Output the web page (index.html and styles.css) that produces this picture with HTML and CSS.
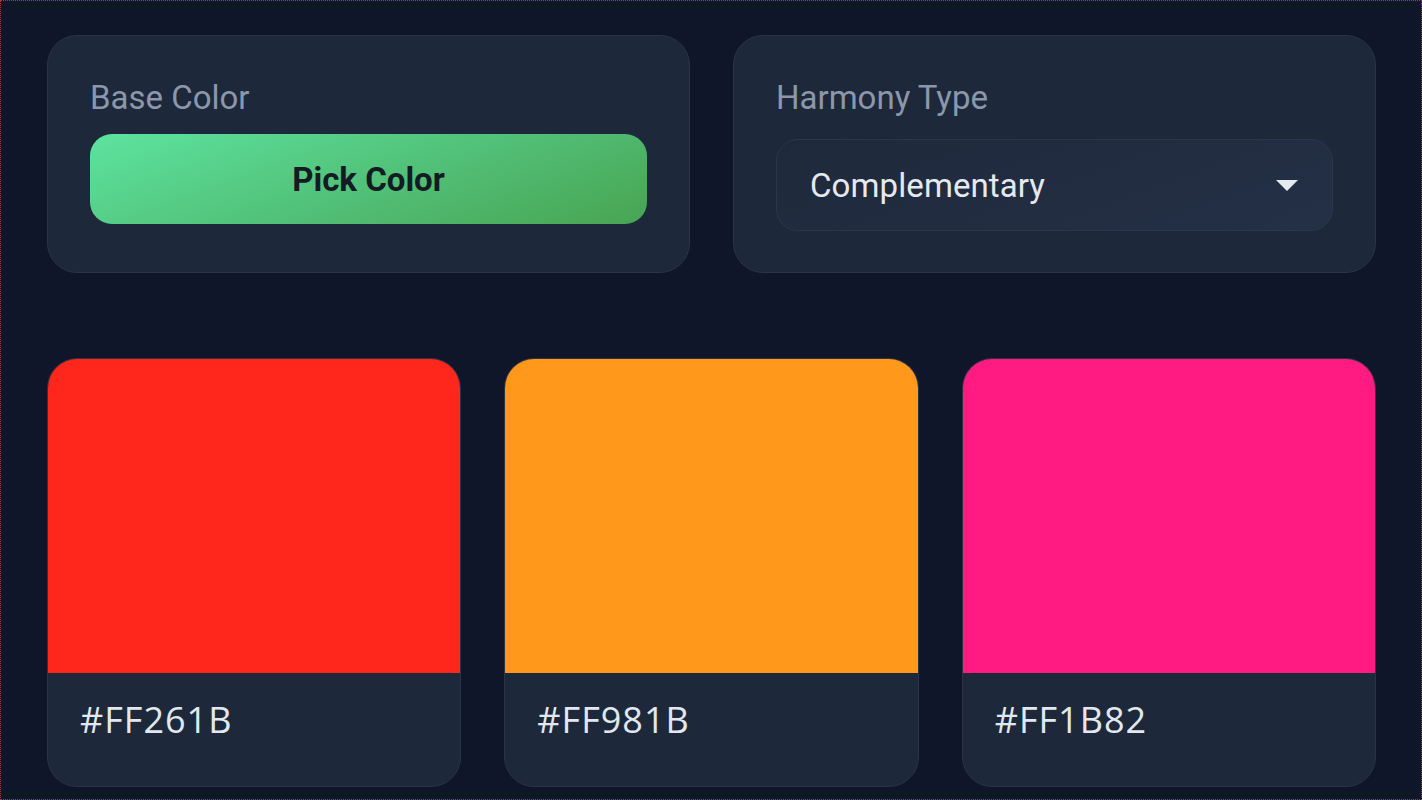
FILE: index.html
```html
<!DOCTYPE html>
<html lang="en">
<head>
<meta charset="utf-8">
<title>Color Harmony</title>
<link rel="stylesheet" href="styles.css">
</head>
<body>
<div class="frame">
  <section class="controls">
    <div class="panel">
      <div class="label label-base">Base Color</div>
      <button class="pick">Pick Color</button>
    </div>
    <div class="panel">
      <div class="label label-harmony">Harmony Type</div>
      <div class="select">
        <span class="select-value">Complementary</span>
        <svg class="caret" width="22" height="11" viewBox="0 0 22 11"><path d="M0 0 L22 0 L11 11 Z" fill="#e5e9f0"/></svg>
      </div>
    </div>
  </section>
  <section class="swatches">
    <div class="swatch">
      <div class="chip" style="background:#FF261B"></div>
      <div class="hex">#FF261B</div>
    </div>
    <div class="swatch">
      <div class="chip" style="background:#FF981B"></div>
      <div class="hex">#FF981B</div>
    </div>
    <div class="swatch">
      <div class="chip" style="background:#FF1B82"></div>
      <div class="hex">#FF1B82</div>
    </div>
  </section>
</div>
</body>
</html>
```

FILE: styles.css
```css
* { box-sizing: border-box; }
html, body { margin: 0; padding: 0; }
body {
  background: #0f1629;
  font-family: Roboto, "Liberation Sans", sans-serif;
  color: #e2e8f0;
  overflow: hidden;
}
.frame {
  width: 1422px;
  height: 800px;
  border: 1px dotted #b8342c;
  padding: 34px 45px 0 46px;
}
.controls {
  display: grid;
  grid-template-columns: 1fr 1fr;
  gap: 43px;
}
.panel {
  background: #1e283b;
  border: 1px solid #2a3447;
  border-radius: 30px;
  padding: 42px 42px 41px 42px;
}
.label {
  font-size: 33px;
  color: #8b97ab;
  line-height: 39px;
}
.label-base { margin-bottom: 17px; }
.label-harmony { margin-bottom: 22px; }
.pick {
  display: block;
  width: 100%;
  height: 90px;
  border: none;
  border-radius: 22px;
  background: linear-gradient(160deg, #5de39f 0%, #52c27a 50%, #48a452 100%);
  font-family: Roboto, "Liberation Sans", sans-serif;
  font-weight: 700;
  font-size: 33px;
  color: #151b22;
  padding: 0;
}
.select {
  height: 92px;
  border: 1px solid #2c3649;
  border-radius: 22px;
  background: linear-gradient(160deg, #1f293c, #243046);
  display: flex;
  align-items: center;
  justify-content: space-between;
  padding: 0 34px 0 33px;
}
.select-value {
  font-size: 33px;
  color: #e5e9f0;
  font-weight: 400;
  letter-spacing: 0.1px;
}
.swatches {
  margin-top: 85px;
  display: grid;
  grid-template-columns: repeat(3, 1fr);
  gap: 43px;
}
.swatch {
  background: #1e283b;
  border: 1px solid #2a3447;
  border-radius: 30px;
  overflow: hidden;
}
.chip {
  height: 314px;
}
.hex {
  font-family: "Open Sans", "DejaVu Sans", sans-serif;
  font-size: 36px;
  font-weight: 500;
  letter-spacing: 1px;
  color: #e2e8f0;
  line-height: 50px;
  padding: 22px 32px 41px;
}
```
